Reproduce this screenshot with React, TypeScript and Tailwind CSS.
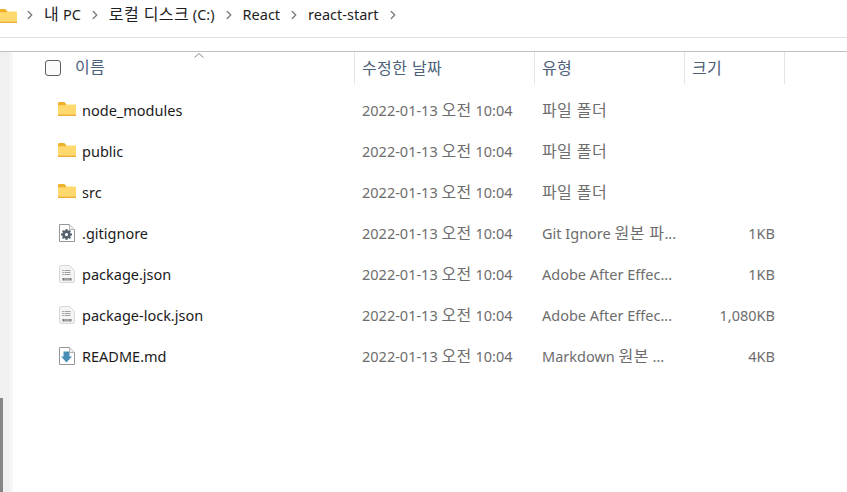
import React from "react";
import { ChevronRight } from "lucide-react";

const font = "font-['Noto_Sans','Noto_Sans_CJK_KR',sans-serif]";

type FileIcon = "folder" | "gear" | "json" | "md";

interface Row {
  name: string;
  type: string;
  size: string;
  icon: FileIcon;
}

const rows: Row[] = [
  { name: "node_modules", type: "파일 폴더", size: "", icon: "folder" },
  { name: "public", type: "파일 폴더", size: "", icon: "folder" },
  { name: "src", type: "파일 폴더", size: "", icon: "folder" },
  { name: ".gitignore", type: "Git Ignore 원본 파...", size: "1KB", icon: "gear" },
  { name: "package.json", type: "Adobe After Effec...", size: "1KB", icon: "json" },
  { name: "package-lock.json", type: "Adobe After Effec...", size: "1,080KB", icon: "json" },
  { name: "README.md", type: "Markdown 원본 ...", size: "4KB", icon: "md" },
];

const crumbs = ["내 PC", "로컬 디스크 (C:)", "React", "react-start"];

// hangul runs render a bit larger than the latin text in the screenshot
const Ko = ({ text }: { text: string }) => (
  <>
    {text.split(/([가-힣]+(?: [가-힣]+)*)/).map((part, i) =>
      i % 2 === 1 ? (
        <span key={i} className="text-[16px] leading-none tracking-[0.4px]">
          {part}
        </span>
      ) : (
        part
      )
    )}
  </>
);

const Folder = ({ className }: { className: string }) => (
  <svg viewBox="0 0 18 14" className={className}>
    <path d="M0 1.500C0 .7.5 0 1.200 0h4.600c.5 0 .9.2 1.200.6L8 2h10v3H0z" fill="#efb02a" />
    <path d="M0 3.200h7.500L8.600 2H18v12H0z" fill="#ffd86e" />
    <path d="M0 12.600h18V14H0z" fill="#ecb03a" />
    <path d="M8.600 2H18v1H8z" fill="#fdeeb5" />
  </svg>
);

const Doc = ({ icon }: { icon: FileIcon }) => {
  if (icon === "json") {
    return (
      <svg viewBox="0 0 16 18" className="w-4 h-[18px] mb-[2px]">
        <path d="M2 .5h8.500l5 5v10.500a1.500 1.500 0 0 1-1.500 1.500H2A1.500 1.500 0 0 1 .5 16V2A1.500 1.500 0 0 1 2 .5z" fill="#f4f4f4" stroke="#d8d8d8" />
        <path d="M5.500 5.500h6M5.500 7.500h6M5.500 9.500h6" stroke="#a0a0a0" />
        <path d="M3.500 5.500h1M3.500 7.500h1M3.500 9.500h1" stroke="#666" />
        <path d="M3.500 13h9v2.500h-9z" fill="#777" />
        <path d="M6 13v2.500M8 13v2.500M10 13v2.500" stroke="#f2f2f2" strokeWidth="0.7" />
      </svg>
    );
  }
  return (
    <svg viewBox="0 0 16 18" className="w-4 h-[18px] mb-[2px]">
      <path d="M.5.5h10l5 5v12H.5z" fill="#fff" stroke="#969696" />
      <path d="M10.500.5v5h5" fill="#efefef" stroke="#b5b5b5" />
      {icon === "gear" ? (
        <>
          <circle cx="7.500" cy="10.500" r="3" fill="none" stroke="#56646f" strokeWidth="2.800" />
          <path d="M7.500 5v2.500M7.500 13.500V16M2 10.500h2.500M10.500 10.500H13M3.600 6.600l1.800 1.800M9.600 12.600l1.800 1.800M3.600 14.400l1.800-1.800M9.600 8.400l1.800-1.800" stroke="#56646f" strokeWidth="1.800" />
        </>
      ) : (
        <path d="M4.500 4.500h6v5h2.500L7.500 15.500 2 9.500h2.500z" fill="#4a8db5" />
      )}
    </svg>
  );
};

export default function App() {
  return (
    <div className={`w-[847px] h-[492px] overflow-hidden bg-white flex flex-col text-[14.5px] ${font}`}>
      <div className="h-[37px] shrink-0 flex items-center">
        <div className="w-[17px] h-[14px] overflow-hidden shrink-0 flex justify-end mt-[-6px]">
          <Folder className="w-[18px] h-[14px] shrink-0" />
        </div>
        <div className="flex items-center ml-[6px] mt-[-7px]">
          {crumbs.map((c) => (
            <React.Fragment key={c}>
              <ChevronRight size={14} strokeWidth={2.5} className="text-[#808080] shrink-0" />
              <span className="mx-[7px] text-[#1e1e1e] whitespace-nowrap">
                <Ko text={c} />
              </span>
            </React.Fragment>
          ))}
          <ChevronRight size={14} strokeWidth={2.5} className="text-[#808080] shrink-0" />
        </div>
      </div>
      <div className="h-[14px] shrink-0 border-t border-[#e0e0e0]" />
      <div className="flex-1 min-h-0 flex border-t border-[#bfbfbf]">
        <div className="w-[10px] shrink-0 bg-[#f0f0f0] flex flex-col justify-end">
          <div className="w-[3px] h-[94px] bg-[#858585]" />
        </div>
        <div className="w-[3px] shrink-0 bg-[#f7f7f7]" />
        <div className="flex-1 min-w-0">
          <div className="relative h-[32px] flex items-stretch">
            <svg viewBox="0 0 10 5" className="absolute left-[181px] top-[1px] w-[10px] h-[5px]">
              <path d="M.5 4.500 5 .5l4.500 4" fill="none" stroke="#8a8a8a" />
            </svg>
            <div className="w-[341px] shrink-0 flex items-center">
              <div className="ml-[32px] w-[16px] h-[16px] rounded-[3px] border border-[#5f5f5f] bg-[#fbfbfb]" />
              <span className="ml-[14px] text-[#4c607a]">
                <Ko text="이름" />
              </span>
            </div>
            <div className="w-[180px] shrink-0 border-l border-[#e5e5e5] pl-[7px] flex items-center text-[#4c607a]">
              <Ko text="수정한 날짜" />
            </div>
            <div className="w-[150px] shrink-0 border-l border-[#e5e5e5] pl-[7px] flex items-center text-[#4c607a]">
              <Ko text="유형" />
            </div>
            <div className="w-[101px] shrink-0 border-x border-[#e5e5e5] pl-[7px] flex items-center text-[#4c607a]">
              <Ko text="크기" />
            </div>
          </div>
          <div className="pt-[6px]">
            {rows.map((r) => (
              <div key={r.name} className="h-[41px] flex items-center">
                <div className="w-[341px] shrink-0 flex items-center">
                  <div className="ml-[45px] w-[18px] flex justify-center">
                    {r.icon === "folder" ? <Folder className="w-[18px] h-[14px] mb-[3px]" /> : <Doc icon={r.icon} />}
                  </div>
                  <span className="ml-[6px] text-[#1b1b1b] whitespace-nowrap">{r.name}</span>
                </div>
                <div className="w-[180px] shrink-0 pl-[8px] text-[#6d6d6d] whitespace-nowrap">
                  <Ko text="2022-01-13 오전 10:04" />
                </div>
                <div className="w-[150px] shrink-0 pl-[8px] text-[#6d6d6d] whitespace-nowrap">
                  <Ko text={r.type} />
                </div>
                <div className="w-[91px] shrink-0 text-right text-[#6d6d6d]">{r.size}</div>
              </div>
            ))}
          </div>
        </div>
      </div>
    </div>
  );
}
